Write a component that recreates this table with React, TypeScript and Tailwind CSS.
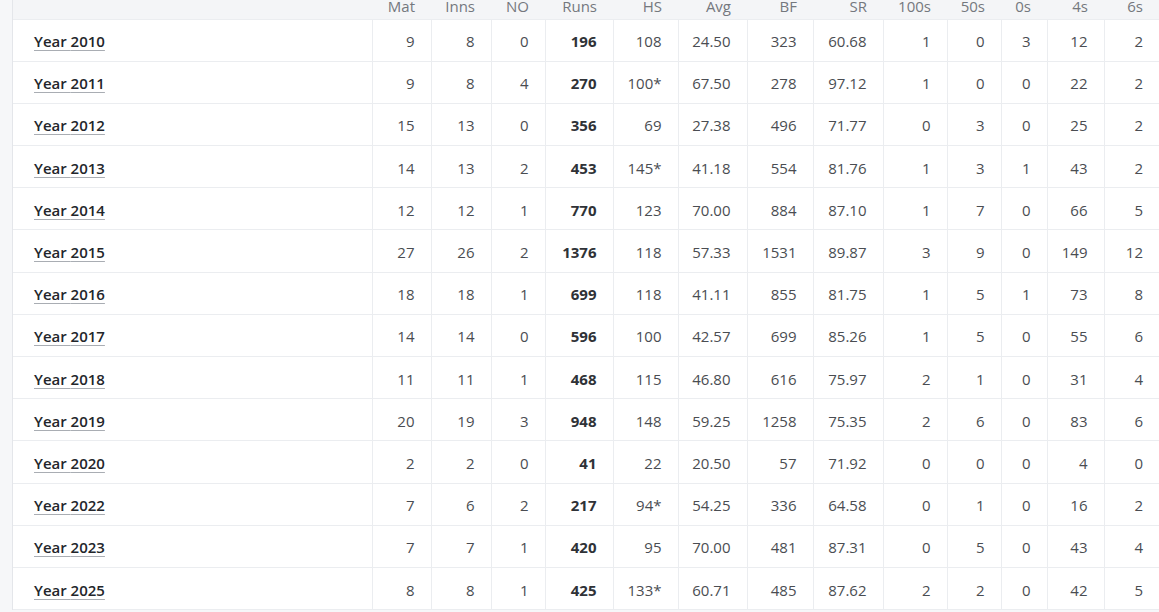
import React from 'react';

type Row = {
  year: number;
  mat: number;
  inns: number;
  no: number;
  runs: number;
  hs: string;
  avg: string;
  bf: number;
  sr: string;
  h100: number;
  h50: number;
  ducks: number;
  fours: number;
  sixes: number;
};

const rows: Row[] = [
  { year: 2010, mat: 9, inns: 8, no: 0, runs: 196, hs: '108', avg: '24.50', bf: 323, sr: '60.68', h100: 1, h50: 0, ducks: 3, fours: 12, sixes: 2 },
  { year: 2011, mat: 9, inns: 8, no: 4, runs: 270, hs: '100*', avg: '67.50', bf: 278, sr: '97.12', h100: 1, h50: 0, ducks: 0, fours: 22, sixes: 2 },
  { year: 2012, mat: 15, inns: 13, no: 0, runs: 356, hs: '69', avg: '27.38', bf: 496, sr: '71.77', h100: 0, h50: 3, ducks: 0, fours: 25, sixes: 2 },
  { year: 2013, mat: 14, inns: 13, no: 2, runs: 453, hs: '145*', avg: '41.18', bf: 554, sr: '81.76', h100: 1, h50: 3, ducks: 1, fours: 43, sixes: 2 },
  { year: 2014, mat: 12, inns: 12, no: 1, runs: 770, hs: '123', avg: '70.00', bf: 884, sr: '87.10', h100: 1, h50: 7, ducks: 0, fours: 66, sixes: 5 },
  { year: 2015, mat: 27, inns: 26, no: 2, runs: 1376, hs: '118', avg: '57.33', bf: 1531, sr: '89.87', h100: 3, h50: 9, ducks: 0, fours: 149, sixes: 12 },
  { year: 2016, mat: 18, inns: 18, no: 1, runs: 699, hs: '118', avg: '41.11', bf: 855, sr: '81.75', h100: 1, h50: 5, ducks: 1, fours: 73, sixes: 8 },
  { year: 2017, mat: 14, inns: 14, no: 0, runs: 596, hs: '100', avg: '42.57', bf: 699, sr: '85.26', h100: 1, h50: 5, ducks: 0, fours: 55, sixes: 6 },
  { year: 2018, mat: 11, inns: 11, no: 1, runs: 468, hs: '115', avg: '46.80', bf: 616, sr: '75.97', h100: 2, h50: 1, ducks: 0, fours: 31, sixes: 4 },
  { year: 2019, mat: 20, inns: 19, no: 3, runs: 948, hs: '148', avg: '59.25', bf: 1258, sr: '75.35', h100: 2, h50: 6, ducks: 0, fours: 83, sixes: 6 },
  { year: 2020, mat: 2, inns: 2, no: 0, runs: 41, hs: '22', avg: '20.50', bf: 57, sr: '71.92', h100: 0, h50: 0, ducks: 0, fours: 4, sixes: 0 },
  { year: 2022, mat: 7, inns: 6, no: 2, runs: 217, hs: '94*', avg: '54.25', bf: 336, sr: '64.58', h100: 0, h50: 1, ducks: 0, fours: 16, sixes: 2 },
  { year: 2023, mat: 7, inns: 7, no: 1, runs: 420, hs: '95', avg: '70.00', bf: 481, sr: '87.31', h100: 0, h50: 5, ducks: 0, fours: 43, sixes: 4 },
  { year: 2025, mat: 8, inns: 8, no: 1, runs: 425, hs: '133*', avg: '60.71', bf: 485, sr: '87.62', h100: 2, h50: 2, ducks: 0, fours: 42, sixes: 5 },
];

const headers = ['Mat', 'Inns', 'NO', 'Runs', 'HS', 'Avg', 'BF', 'SR', '100s', '50s', '0s', '4s', '6s'];
const widths = [59, 60, 54, 68, 65, 69, 66, 70, 64, 54, 46, 57, 55];

const Cell = ({ children, bold }: { children: React.ReactNode; bold?: boolean }) => (
  <td
    className={`h-[42.2px] border-l border-[#ebedf0] pr-4 pl-2 pt-[2px] text-right align-middle leading-5 ${
      bold ? 'font-bold text-[#2f3237]' : 'text-[#4a4d52]'
    }`}
  >
    {children}
  </td>
);

export default function App() {
  return (
    <div className="min-h-screen overflow-hidden bg-[#f6f7f9] pl-[12px] font-['Open_Sans',sans-serif] text-[15px]">
      <div className="w-[1147px] border-l border-[#e4e6ea] bg-white">
        <table className="w-full table-fixed border-collapse">
          <colgroup>
            <col className="w-[359px]" />
            {widths.map((w, i) => (
              <col key={i} style={{ width: w }} />
            ))}
          </colgroup>
          <thead>
            <tr className="bg-[#f4f5f7]">
              <th className="h-[19px] p-0" />
              {headers.map((h) => (
                <th key={h} className="h-[19px] p-0 pr-4 text-right align-top text-[15px] font-normal leading-[13px] text-[#74787e]">
                  {h}
                </th>
              ))}
            </tr>
          </thead>
          <tbody>
            {rows.map((r) => (
              <tr key={r.year} className="border-t border-[#ebedf0] last:border-b">
                <td className="h-[42.2px] pl-[21px] pt-[2px] align-middle leading-5">
                  <a
                    href="#"
                    className="font-semibold text-[#23262b] underline decoration-[#a9adb3] decoration-1 underline-offset-[3px]"
                  >
                    Year {r.year}
                  </a>
                </td>
                <Cell>{r.mat}</Cell>
                <Cell>{r.inns}</Cell>
                <Cell>{r.no}</Cell>
                <Cell bold>{r.runs}</Cell>
                <Cell>{r.hs}</Cell>
                <Cell>{r.avg}</Cell>
                <Cell>{r.bf}</Cell>
                <Cell>{r.sr}</Cell>
                <Cell>{r.h100}</Cell>
                <Cell>{r.h50}</Cell>
                <Cell>{r.ducks}</Cell>
                <Cell>{r.fours}</Cell>
                <Cell>{r.sixes}</Cell>
              </tr>
            ))}
          </tbody>
        </table>
      </div>
    </div>
  );
}
